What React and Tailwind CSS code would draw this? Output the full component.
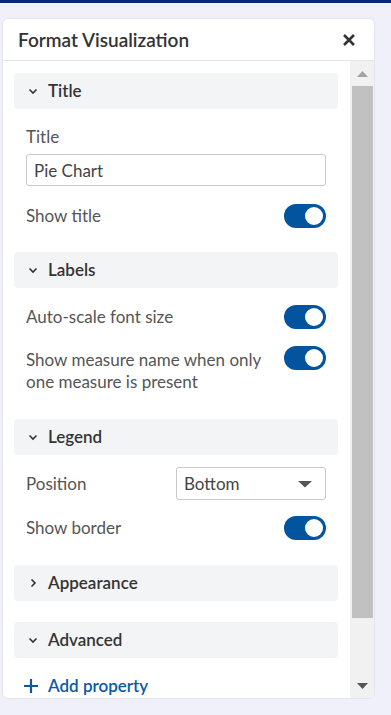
import React, { useState } from "react";

const Chevron = ({ open }) => (
  <svg width="10" height="10" viewBox="0 0 10 10" className="shrink-0">
    {open ? (
      <path d="M1.5 3.5 L5 7 L8.5 3.5" fill="none" stroke="#333" strokeWidth="1.6" />
    ) : (
      <path d="M3.5 1.5 L7 5 L3.5 8.5" fill="none" stroke="#333" strokeWidth="1.6" />
    )}
  </svg>
);

const Toggle = () => (
  <div className="w-[42px] h-[24px] rounded-full bg-[#02549f] flex items-center justify-end px-[3px] shrink-0">
    <div className="w-[18px] h-[18px] rounded-full bg-white" />
  </div>
);

const SectionHeader = ({ title, open = true }) => (
  <div className="h-[36px] rounded bg-[#f3f4f6] flex items-center gap-[10px] pl-[14px] text-[17px] leading-[22px] font-semibold text-[#333]">
    <Chevron open={open} />
    <span>{title}</span>
  </div>
);

const Row = ({ label, children, className = "" }) => (
  <div className={`flex items-center justify-between ${className}`}>
    <span className="text-[17px] leading-[24px] text-[#555]">{label}</span>
    {children}
  </div>
);

export default function App() {
  const [title, setTitle] = useState("Pie Chart");

  return (
    <div
      className="min-h-[715px] bg-[#eff0fa]"
      style={{ fontFamily: "Lato, 'Open Sans', sans-serif" }}
    >
      <div className="h-[3px] bg-[#062a74]" />
      <div className="pt-[15px] pl-[2px] w-[375px]">
        <div className="h-[681px] bg-white border border-[#e3e5ea] rounded-[6px] flex flex-col overflow-hidden">
          <div className="h-[42px] flex items-center justify-between pl-[15px] pr-[18px] border-b border-[#e3e5ea] shrink-0">
            <span className="text-[19px] leading-[24px] font-semibold text-[#333]">Format Visualization</span>
            <svg width="14" height="14" viewBox="0 0 14 14">
              <path d="M2 2 L12 12 M12 2 L2 12" stroke="#333" strokeWidth="2.6" />
            </svg>
          </div>

          <div className="flex flex-1 min-h-0">
            <div className="flex-1 pl-[11px] pr-[12px] pt-[12px] overflow-hidden">
              <SectionHeader title="Title" />
              <div className="px-[12px] pt-[18px] pb-[24px]">
                <div className="text-[17px] text-[#555] leading-[20px]">Title</div>
                <input
                  value={title}
                  onChange={(e) => setTitle(e.target.value)}
                  className="mt-[7px] w-full h-[32px] border border-[#c8c8c8] rounded-[3px] px-[7px] text-[17px] text-[#444] outline-none"
                />
                <Row label="Show title" className="mt-[18px]">
                  <Toggle />
                </Row>
              </div>

              <SectionHeader title="Labels" />
              <div className="px-[12px] pt-[17px] pb-[26px]">
                <Row label="Auto-scale font size">
                  <Toggle />
                </Row>
                <div className="mt-[17px] flex items-start justify-between">
                  <span className="text-[17px] text-[#555] leading-[22px] w-[250px] pt-[3px]">
                    Show measure name when only one measure is present
                  </span>
                  <Toggle />
                </div>
              </div>

              <SectionHeader title="Legend" />
              <div className="px-[12px] pt-[12px] pb-[25px]">
                <Row label="Position">
                  <div className="w-[150px] h-[33px] border border-[#c8c8c8] rounded-[3px] flex items-center justify-between pl-[7px] pr-[12px] text-[17px] leading-[22px] text-[#444]">
                    <span>Bottom</span>
                    <svg width="16" height="8" viewBox="0 0 16 8">
                      <path d="M1 1 H15 L8 7.5 Z" fill="#555" />
                    </svg>
                  </div>
                </Row>
                <Row label="Show border" className="mt-[16px]">
                  <Toggle />
                </Row>
              </div>

              <SectionHeader title="Appearance" open={false} />
              <div className="h-[21px]" />
              <SectionHeader title="Advanced" />
              <div className="flex items-center gap-[10px] pl-[10px] pt-[18px] text-[17px] leading-[20px] font-semibold text-[#0b59a5]">
                <svg width="14" height="14" viewBox="0 0 14 14">
                  <path d="M7 0 V14 M0 7 H14" stroke="#0b59a5" strokeWidth="2.2" />
                </svg>
                <span>Add property</span>
              </div>
            </div>

            <div className="w-[24px] bg-[#f1f1f1] flex flex-col items-center shrink-0">
              <div className="h-[25px] flex items-center justify-center">
                <svg width="11" height="6" viewBox="0 0 11 6">
                  <path d="M0 6 L5.5 0 L11 6 Z" fill="#a3a3a3" />
                </svg>
              </div>
              <div className="w-[21px] h-[532px] bg-[#c1c1c1]" />
              <div className="flex-1" />
              <div className="h-[25px] flex items-center justify-center">
                <svg width="11" height="6" viewBox="0 0 11 6">
                  <path d="M0 0 L11 0 L5.5 6 Z" fill="#555" />
                </svg>
              </div>
            </div>
          </div>
        </div>
      </div>
    </div>
  );
}
